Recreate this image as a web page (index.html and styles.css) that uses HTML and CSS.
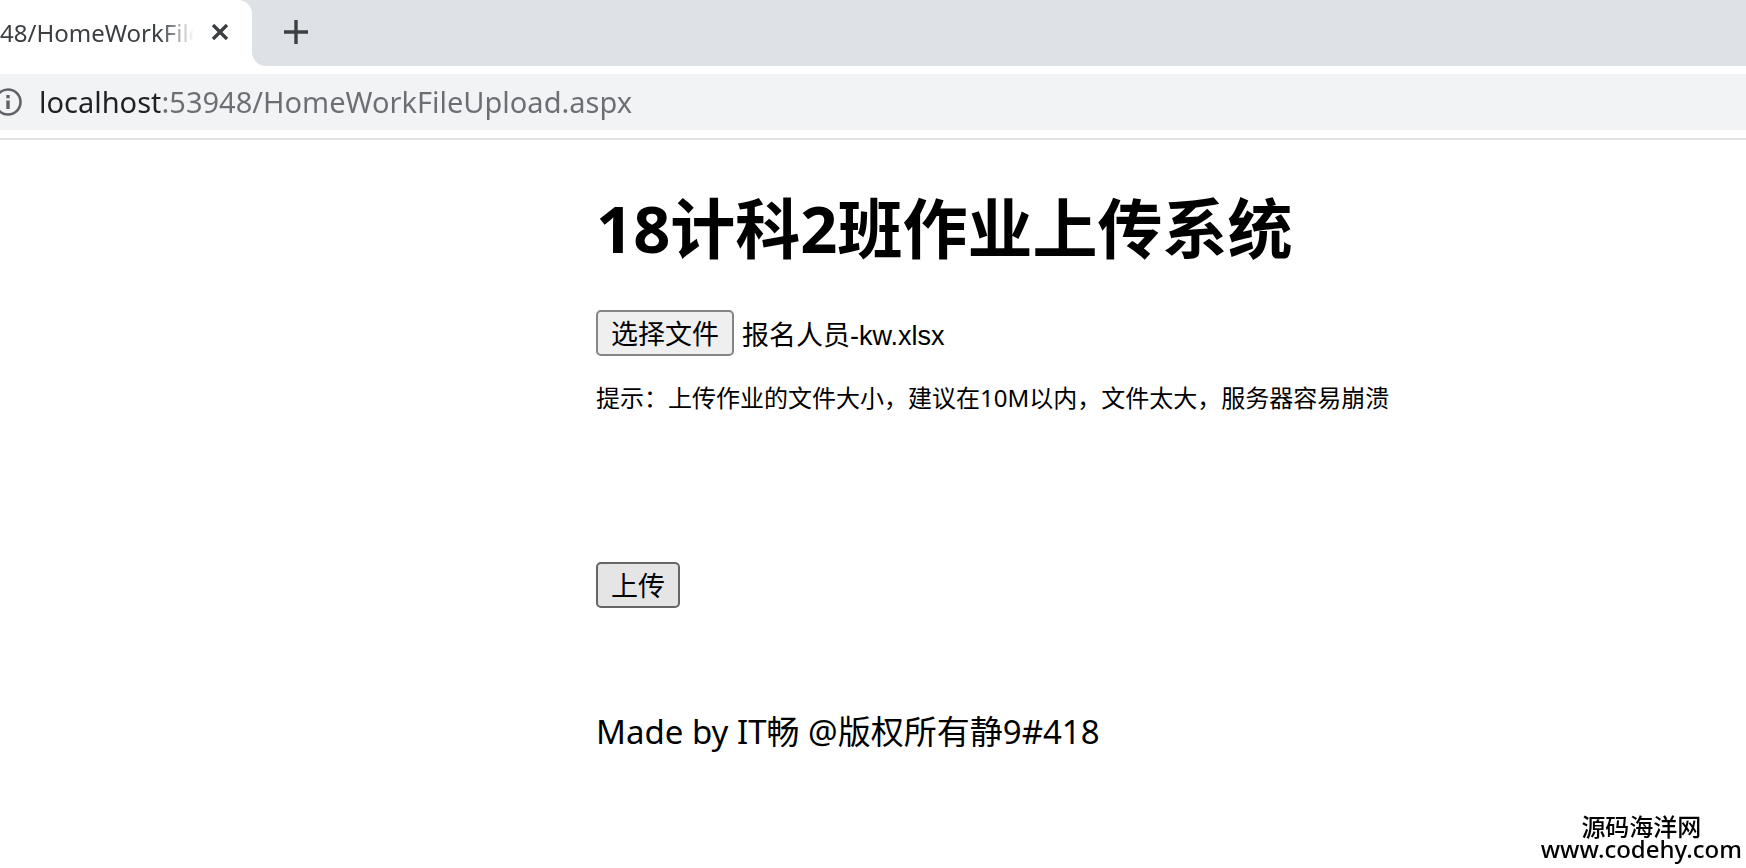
FILE: index.html
```html
<!DOCTYPE html>
<html lang="zh-CN">
<head>
  <meta charset="UTF-8" />
  <meta name="viewport" content="width=device-width, initial-scale=1.0"/>
  <title>HomeWorkFileUpload</title>
  <link rel="stylesheet" href="styles.css">
</head>
<body>

  <!-- Browser bar -->
  <header class="browser">
    <div class="tab-strip">
      <div class="tab-corner">
        <div class="tab">
          <span class="tab-title">48/HomeWorkFile</span>
          <button type="button" class="icon-btn" aria-label="关闭">
            <svg width="18" height="18" viewBox="0 0 18 18"><path d="M2 1L16 15M16 1L2 15"/></svg>
          </button>
        </div>
      </div>
      <div class="strip-rest">
        <button type="button" class="icon-btn" aria-label="新标签页">
          <svg width="26" height="26" viewBox="0 0 26 26"><path d="M13 0V24M1 12H25"/></svg>
        </button>
      </div>
    </div>
    <div class="toolbar">
      <div class="address">
        <svg class="info" width="28" height="28" viewBox="0 0 28 28">
          <circle cx="14" cy="14" r="12.5"/>
          <path d="M14 12.5V21M14 7V10.2" stroke-width="3.4"/>
        </svg>
        <input type="text" class="url" aria-label="地址" value="localhost:53948/HomeWorkFileUpload.aspx" />
      </div>
    </div>
  </header>

  <!-- Upload page -->
  <main class="page">
    <form class="upload">
      <h1>18计科2班作业上传系统</h1>
      <div class="file-row">
        <input type="file" id="file" class="file-input" />
        <button type="button" class="btn" onclick="document.getElementById('file').click()">选择文件</button>
        <label for="file" id="fileName">报名人员-kw.xlsx</label>
      </div>
      <p class="hint">提示：上传作业的文件大小，建议在10M以内，文件太大，服务器容易崩溃</p>
      <button type="button" class="btn submit">上传</button>
      <p class="made-by">Made by IT畅 @版权所有静9#418</p>
    </form>
  </main>

  <div class="watermark">
    <div class="site-name">源码海洋网</div>
    <div class="site-url">www.codehy.com</div>
  </div>

  <script>
    document.getElementById('file').addEventListener('change', function() {
      if (this.files.length) {
        document.getElementById('fileName').innerText = this.files[0].name;
      }
    });
  </script>
</body>
</html>
```

FILE: styles.css
```css
:root {
  --strip: #dee1e6;
  --field: #f1f3f4;
  --icon: #3c4043;
  --ui: "Noto Sans", "Noto Sans CJK SC", sans-serif;
}

* {
  box-sizing: border-box;
}

body {
  margin: 0;
  font-family: var(--ui);
  background: #fff;
  color: #000;
  overflow: hidden;
}

.tab-strip {
  display: flex;
  height: 66px;
  background: #fff;
}

.tab-corner {
  display: flex;
  background: linear-gradient(var(--strip) 50%, #fff 50%);
}

.tab {
  display: flex;
  align-items: center;
  justify-content: space-between;
  width: 252px;
  padding-right: 23px;
  border-radius: 0 14px 0 0;
  background: #fff;
}

.tab-title {
  width: 194px;
  overflow: hidden;
  white-space: nowrap;
  font-size: 24px;
  line-height: 32px;
  color: var(--icon);
  -webkit-mask-image: linear-gradient(90deg, #000 160px, transparent 194px);
  mask-image: linear-gradient(90deg, #000 160px, transparent 194px);
}

.icon-btn {
  display: flex;
  padding: 0;
  border: none;
  background: none;
  cursor: pointer;
}

.icon-btn svg {
  fill: none;
  stroke: var(--icon);
  stroke-width: 3.4;
}

.strip-rest {
  flex: 1;
  display: flex;
  align-items: center;
  padding-left: 31px;
  border-radius: 0 0 0 14px;
  background: var(--strip);
}

.toolbar {
  padding: 8px 0;
  border-bottom: 2px solid var(--strip);
}

.address {
  display: flex;
  align-items: center;
  height: 56px;
  background: var(--field);
}

.info {
  flex: none;
  margin-left: -6px;
  fill: none;
  stroke: #5f6368;
  stroke-width: 2.6;
}

.url {
  flex: 1;
  margin-left: 17px;
  padding: 0 0 2px;
  border: none;
  outline: none;
  font-family: var(--ui);
  font-size: 29px;
  /* host is darker than the rest of the address */
  color: transparent;
  background: linear-gradient(90deg, #202124 121px, #6b6f74 121px);
  -webkit-background-clip: text;
  background-clip: text;
}

.page {
  padding: 40px 0 0;
}

.upload {
  margin-left: calc(50% - 277px);
}

h1 {
  margin: 0 0 34px;
  font-size: 65px;
  line-height: 96px;
}

.file-row {
  display: flex;
  align-items: center;
  gap: 8px;
  font-family: "Liberation Sans", "Noto Sans CJK SC", sans-serif;
  font-size: 27px;
}

.file-input {
  position: absolute;
  width: 1px;
  height: 1px;
  opacity: 0;
}

.btn {
  height: 46px;
  padding: 3px 13px 0;
  border: 2px solid #858585;
  border-radius: 5px;
  background: #efefef;
  color: #000;
  font-family: "Liberation Sans", "Noto Sans CJK SC", sans-serif;
  font-size: 27px;
  line-height: 40px;
}

.submit {
  border-color: #666;
  background: #e5e5e5;
}

.hint {
  margin: 24px 0 146px;
  font-size: 24px;
  line-height: 36px;
}

.made-by {
  margin: 100px 0 0;
  font-size: 33px;
  line-height: 48px;
}

.watermark {
  position: fixed;
  right: 4px;
  bottom: 8px;
  text-align: center;
  font-size: 24px;
  font-weight: 500;
  line-height: 22px;
}
```
